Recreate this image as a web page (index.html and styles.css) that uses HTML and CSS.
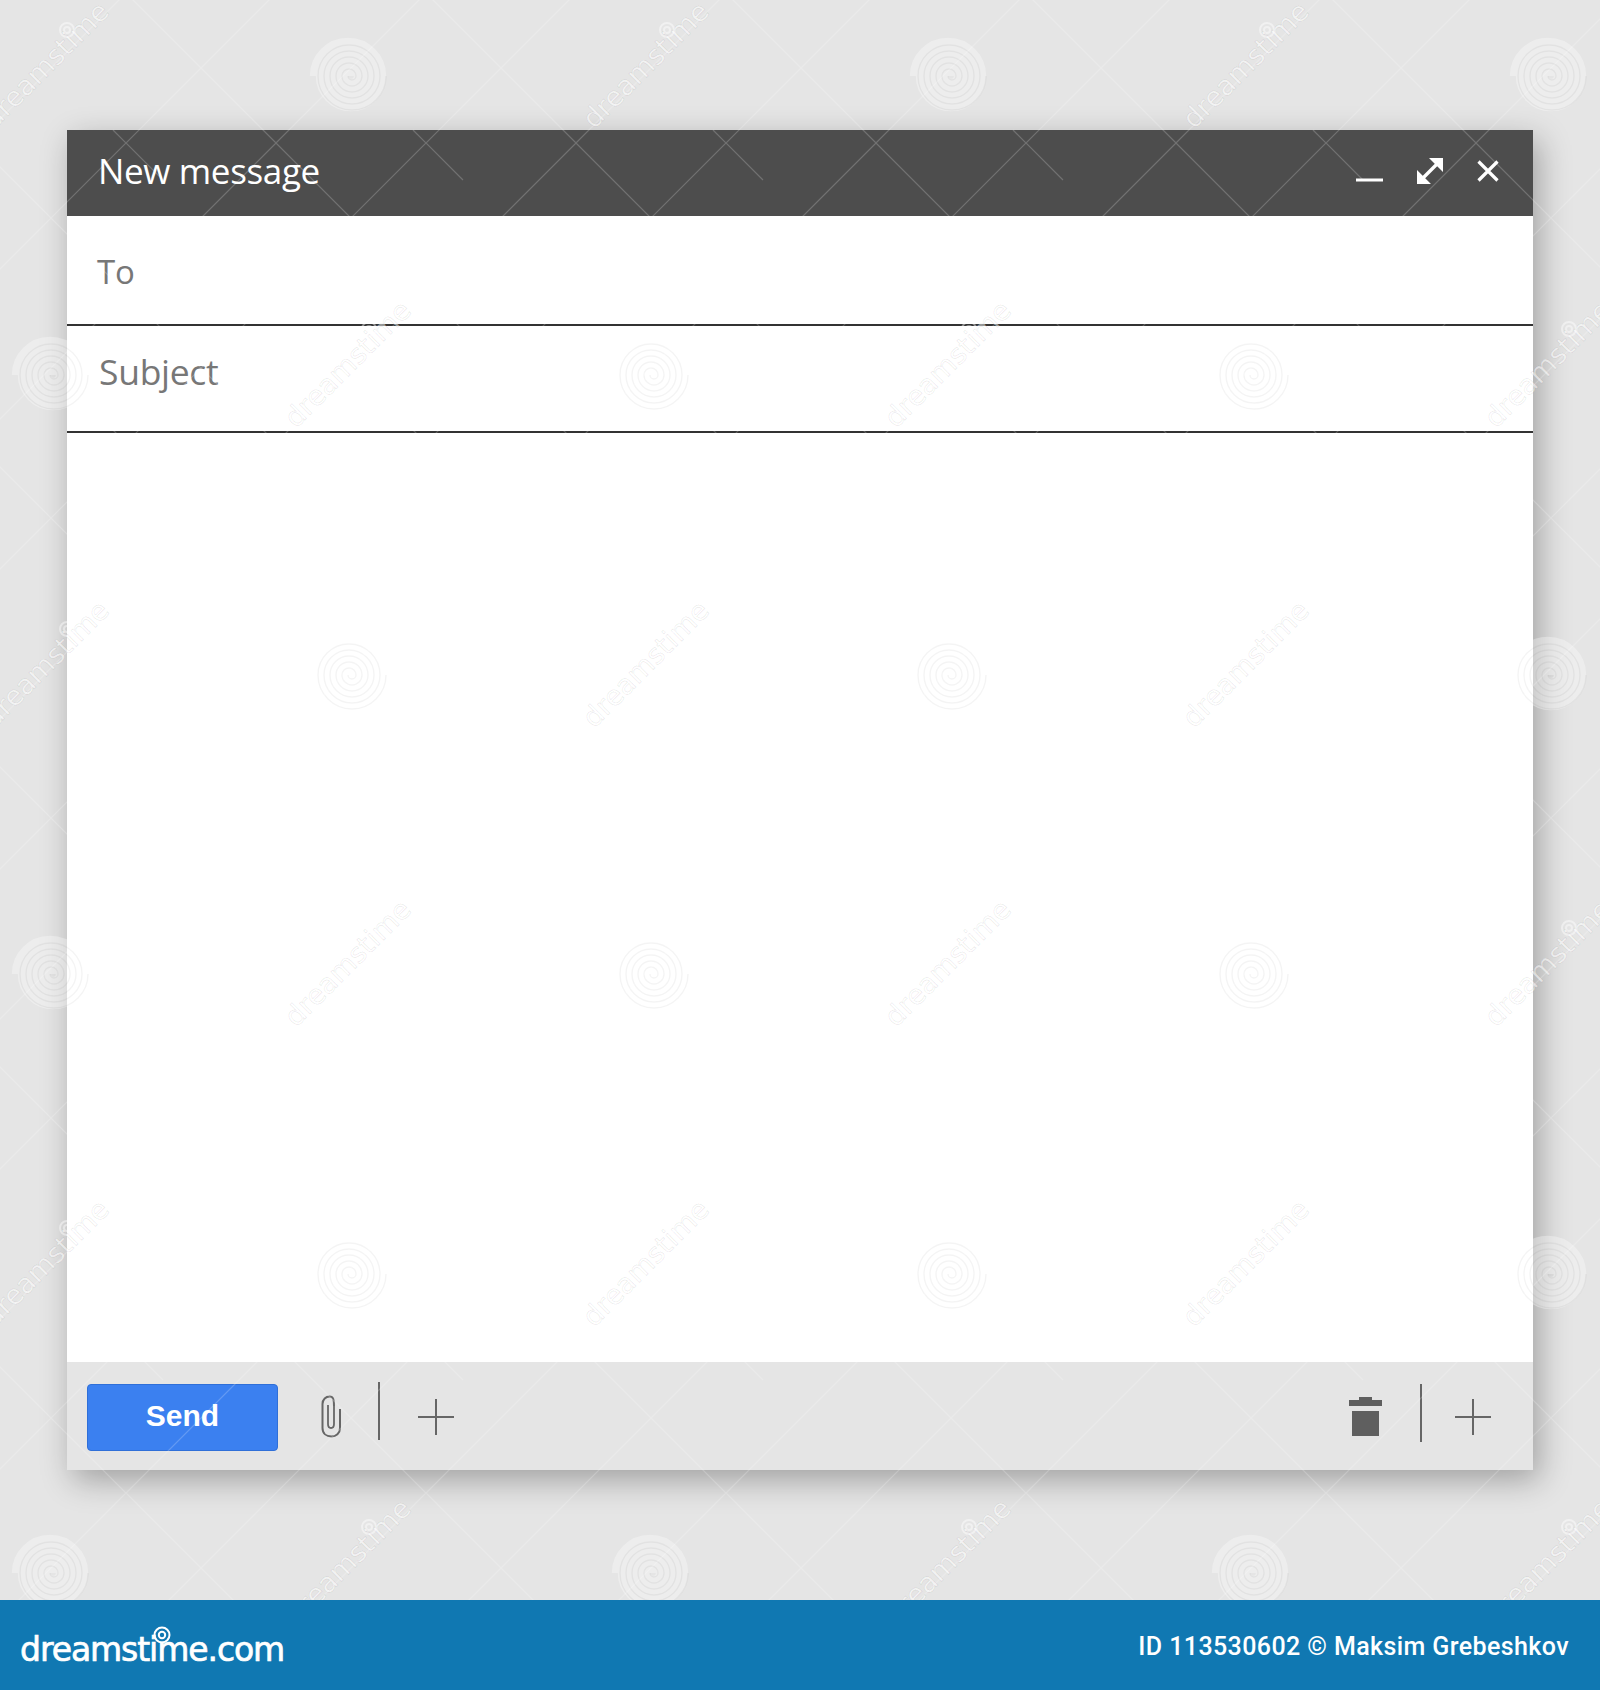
FILE: index.html
```html
<!DOCTYPE html>
<html lang="en">
<head>
<meta charset="utf-8">
<title>New message</title>
<link rel="stylesheet" href="styles.css">
</head>
<body>
<main class="stage">
  <section class="composer">
    <header class="composer-head">
      <h1 class="composer-title">New message</h1>
      <div class="window-actions">
        <svg class="win-icon win-min" viewBox="0 0 27 4"><rect width="27" height="3" y="0.5" fill="#fff"/></svg>
        <svg class="win-icon win-expand" viewBox="0 0 26 26"><path d="M5.5 20.5 20.5 5.5" stroke="#fff" stroke-width="3.4" fill="none"/><path d="M12 0H26V14Z M0 12V26H14Z" fill="#fff"/></svg>
        <svg class="win-icon win-close" viewBox="0 0 22 22"><path d="M1.5 1.5 20.5 20.5M20.5 1.5 1.5 20.5" stroke="#fff" stroke-width="3.2" fill="none"/></svg>
      </div>
    </header>
    <div class="field field-to">To</div>
    <div class="field field-subject">Subject</div>
    <div class="composer-body"></div>
    <footer class="composer-foot">
      <button class="send" type="button">Send</button>
      <svg class="tool-clip" viewBox="0 0 20 43"><path d="M13 11V29C13 31.500 12 33 10 33 8 33 7 31.500 7 29V10" fill="none" stroke="#666" stroke-width="1.800"/><path d="M19 14V33C19 38.500 15 41.500 10.500 41.500 5.500 41.500 1.500 38.500 1.500 33V9C1.500 4.500 5 1.500 8.500 1.500 12.500 1.500 13 5 13 11" fill="none" stroke="#666" stroke-width="2"/></svg>
      <span class="tool-sep tool-sep-left"></span>
      <svg class="tool-plus" viewBox="0 0 36 36"><path d="M0 18H36M18 0V36" stroke="#666" stroke-width="2" fill="none"/></svg>
      <span class="foot-gap"></span>
      <svg class="tool-trash" viewBox="0 0 33 39"><path d="M10 0H23V3H33V9H0V3H10Z M3 14H30V39H3Z" fill="#5f5f5f"/></svg>
      <span class="tool-sep tool-sep-right"></span>
      <svg class="tool-plus tool-plus-right" viewBox="0 0 36 36"><path d="M0 18H36M18 0V36" stroke="#666" stroke-width="2" fill="none"/></svg>
    </footer>
  </section>

  <svg class="watermark" viewBox="0 0 1600 1600" aria-hidden="true">
    <defs>
      <pattern id="lattice" x="126" y="143" width="300" height="300" patternUnits="userSpaceOnUse">
        <path class="lattice-line" d="M0 150 150 0M0 300 300 0M150 300 300 150M150 0 300 150M0 150 150 300M0 0 37 37M287 287 300 300"/>
      </pattern>
      <path id="spiral-line" d="M2 0A4 4 0 0 0 -6 0A7 7 0 0 0 8 0A10 10 0 0 0 -12 0A13 13 0 0 0 14 0A16 16 0 0 0 -18 0A19 19 0 0 0 20 0A22 22 0 0 0 -24 0A25 25 0 0 0 26 0A28 28 0 0 0 -30 0A31 31 0 0 0 32 0A34 34 0 0 0 -36 0"/>
      <g id="stamp">
        <g transform="translate(2 3)">
          <use href="#spiral-line" class="spiral-band"/>
          <use href="#spiral-line" class="spiral-edge" transform="rotate(180)"/>
        </g>
        <text class="stamp-text" transform="translate(246 57) rotate(-45)">dreamstime</text>
        <circle class="stamp-dot" cx="319" cy="-43" r="7"/>
        <circle class="stamp-dot" cx="319" cy="-43" r="3"/>
      </g>
    </defs>
    <use href="#stamp" x="-252" y="73"/><use href="#stamp" x="348" y="73"/><use href="#stamp" x="948" y="73"/><use href="#stamp" x="1548" y="73"/>
    <use href="#stamp" x="-550" y="372"/><use href="#stamp" x="50" y="372"/><use href="#stamp" x="650" y="372"/><use href="#stamp" x="1250" y="372"/>
    <use href="#stamp" x="-252" y="672"/><use href="#stamp" x="348" y="672"/><use href="#stamp" x="948" y="672"/><use href="#stamp" x="1548" y="672"/>
    <use href="#stamp" x="-550" y="971"/><use href="#stamp" x="50" y="971"/><use href="#stamp" x="650" y="971"/><use href="#stamp" x="1250" y="971"/>
    <use href="#stamp" x="-252" y="1271"/><use href="#stamp" x="348" y="1271"/><use href="#stamp" x="948" y="1271"/><use href="#stamp" x="1548" y="1271"/>
    <use href="#stamp" x="-550" y="1570"/><use href="#stamp" x="50" y="1570"/><use href="#stamp" x="650" y="1570"/><use href="#stamp" x="1250" y="1570"/>
    <rect width="1600" height="1600" fill="url(#lattice)"/>
  </svg>
</main>

<footer class="credit">
  <div class="brand">
    <span class="brand-name">dreamstime.com</span>
    <svg class="brand-mark" viewBox="0 0 18 18"><circle cx="9" cy="9" r="7.500" fill="none" stroke="#fff" stroke-width="2"/><circle cx="9" cy="9" r="3.200" fill="none" stroke="#fff" stroke-width="2"/></svg>
  </div>
  <p class="credit-id">ID 113530602 © Maksim Grebeshkov</p>
</footer>
</body>
</html>
```

FILE: styles.css
```css
* { box-sizing: border-box; }

html, body {
  margin: 0;
  padding: 0;
}

body {
  width: 1600px;
  height: 1690px;
  display: flex;
  flex-direction: column;
  background: #e5e5e5;
  font-family: "Open Sans", "Liberation Sans", sans-serif;
}

.stage {
  position: relative;
  height: 1600px;
  padding: 130px 67px;
  overflow: hidden;
}

.composer {
  display: flex;
  flex-direction: column;
  height: 1340px;
  background: #fff;
  box-shadow: 6px 10px 30px rgba(0, 0, 0, 0.3);
}

.composer-head {
  display: flex;
  align-items: flex-start;
  justify-content: space-between;
  height: 86px;
  flex: none;
  padding: 0 34px 0 31px;
  background: #4d4d4d;
  color: #fff;
}

.composer-title {
  margin: 18px 0 0;
  font-size: 35px;
  line-height: 46px;
  font-weight: 400;
  letter-spacing: -0.35px;
}

.window-actions {
  display: flex;
  align-items: flex-start;
  gap: 34px;
  padding-top: 28px;
}

.win-icon { display: block; flex: none; }
.win-min { width: 27px; height: 4px; margin-top: 20px; }
.win-expand { width: 26px; height: 26px; }
.win-close { width: 22px; height: 22px; margin-top: 2px; }

.field {
  flex: none;
  color: #777;
  line-height: 46px;
  letter-spacing: -0.3px;
  border-bottom: 2px solid #333;
}

.field-to {
  height: 110px;
  padding: 33px 0 0 30px;
  font-size: 33px;
}

.field-subject {
  height: 107px;
  padding: 22px 0 0 32px;
  font-size: 35.5px;
}

.composer-body { flex: 1; }

.composer-foot {
  display: flex;
  align-items: center;
  flex: none;
  height: 108px;
  padding: 0 42px 0 20px;
  background: #e5e5e5;
}

.send {
  width: 191px;
  height: 67px;
  margin-top: 2px;
  padding: 0 0 2px;
  border: 1px solid #2f6fd8;
  border-radius: 4px;
  background: #3b80f0;
  color: #fff;
  font-family: "Liberation Sans", Arial, sans-serif;
  font-size: 30px;
  font-weight: 700;
}

.tool-clip { width: 20px; height: 43px; margin: 0 0 0 43px; flex: none; }

.tool-sep {
  flex: none;
  width: 2px;
  height: 58px;
  margin: 0 0 10px 37px;
  background: #666;
}

.tool-sep-right { margin: 0 0 7px 38px; }

.tool-plus { width: 36px; height: 36px; margin: 2px 0 0 38px; flex: none; }
.tool-plus-right { margin-left: 33px; }

.foot-gap { flex: 1; }

.tool-trash { width: 33px; height: 39px; margin-top: 0; flex: none; }

.watermark {
  position: absolute;
  left: 0;
  top: 0;
  width: 1600px;
  height: 1600px;
  pointer-events: none;
}

.lattice-line {
  fill: none;
  stroke: #fff;
  stroke-opacity: 0.2;
  stroke-width: 1.2;
}

.spiral-band {
  fill: none;
  stroke: #fff;
  stroke-opacity: 0.32;
  stroke-width: 8.5;
}

.spiral-edge {
  fill: none;
  stroke: #000;
  stroke-opacity: 0.045;
  stroke-width: 1.4;
}

.stamp-text {
  font-family: "DejaVu Sans", sans-serif;
  font-size: 27.5px;
  fill: #fff;
  fill-opacity: 0.5;
  stroke: #000;
  stroke-opacity: 0.07;
  stroke-width: 1;
}

.stamp-dot {
  fill: none;
  stroke: #fff;
  stroke-opacity: 0.45;
  stroke-width: 2;
}

.credit {
  display: flex;
  align-items: center;
  justify-content: space-between;
  height: 90px;
  flex: none;
  padding: 0 31px 0 20px;
  background: #1078b2;
  color: #fff;
}

.brand { position: relative; }

.brand-name {
  display: block;
  font-family: "DejaVu Sans", sans-serif;
  font-size: 33px;
  line-height: 40px;
  margin-top: 9px;
  letter-spacing: -1.07px;
  -webkit-text-stroke: 0.7px #fff;
}

.brand-mark {
  position: absolute;
  left: 133px;
  top: 5px;
  width: 18px;
  height: 18px;
}

.credit-id {
  margin: 2px 0 0;
  font-family: Roboto, sans-serif;
  font-size: 25px;
  font-weight: 500;
  letter-spacing: 0.4px;
}
```
